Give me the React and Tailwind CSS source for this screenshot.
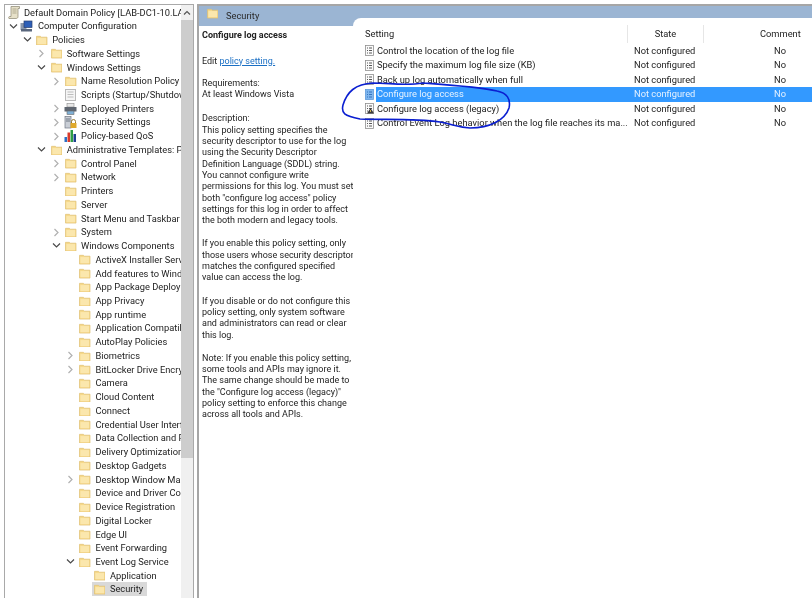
const tree = [
  ["Computer Configuration", 1, "open", "computer"],
  ["Policies", 2, "open"],
  ["Software Settings", 3, "closed"],
  ["Windows Settings", 3, "open"],
  ["Name Resolution Policy", 4, "closed"],
  ["Scripts (Startup/Shutdown)", 4, null, "scripts"],
  ["Deployed Printers", 4, "closed", "printer"],
  ["Security Settings", 4, "closed", "security"],
  ["Policy-based QoS", 4, "closed", "qos"],
  ["Administrative Templates: Policy", 3, "open"],
  ["Control Panel", 4, "closed"],
  ["Network", 4, "closed"],
  ["Printers", 4],
  ["Server", 4],
  ["Start Menu and Taskbar", 4],
  ["System", 4, "closed"],
  ["Windows Components", 4, "open"],
  ["ActiveX Installer Service", 5],
  ["Add features to Windows", 5],
  ["App Package Deployment", 5],
  ["App Privacy", 5],
  ["App runtime", 5],
  ["Application Compatibility", 5],
  ["AutoPlay Policies", 5],
  ["Biometrics", 5, "closed"],
  ["BitLocker Drive Encryption", 5, "closed"],
  ["Camera", 5],
  ["Cloud Content", 5],
  ["Connect", 5],
  ["Credential User Interface", 5],
  ["Data Collection and Preview", 5],
  ["Delivery Optimization", 5],
  ["Desktop Gadgets", 5],
  ["Desktop Window Manager", 5, "closed"],
  ["Device and Driver Compat", 5],
  ["Device Registration", 5],
  ["Digital Locker", 5],
  ["Edge UI", 5],
  ["Event Forwarding", 5],
  ["Event Log Service", 5, "open"],
  ["Application", 6],
  ["Security", 6, null, null, true],
  ["Setup", 6],
];

const indent = {
  1: "pl-[1px]",
  2: "pl-[15.4px]",
  3: "pl-[29.8px]",
  4: "pl-[44.2px]",
  5: "pl-[58.6px]",
  6: "pl-[73px]",
};

const settings = [
  ["Control the location of the log file", "doc"],
  ["Specify the maximum log file size (KB)", "doc"],
  ["Back up log automatically when full", "doc"],
  ["Configure log access", "doc", true],
  ["Configure log access (legacy)", "legacy"],
  ["Control Event Log behavior when the log file reaches its ma...", "doc"],
];

const description = [
  [
    "This policy setting specifies the",
    "security descriptor to use for the log",
    "using the Security Descriptor",
    "Definition Language (SDDL) string.",
    "You cannot configure write",
    "permissions for this log. You must set",
    "both \"configure log access\" policy",
    "settings for this log in order to affect",
    "the both modern and legacy tools.",
  ],
  [
    "If you enable this policy setting, only",
    "those users whose security descriptor",
    "matches the configured specified",
    "value can access the log.",
  ],
  [
    "If you disable or do not configure this",
    "policy setting, only system software",
    "and administrators can read or clear",
    "this log.",
  ],
  [
    "Note: If you enable this policy setting,",
    "some tools and APIs may ignore it.",
    "The same change should be made to",
    "the \"Configure log access (legacy)\"",
    "policy setting to enforce this change",
    "across all tools and APIs.",
  ],
];

const Chevron = ({ kind }) => (
  <span className="w-[14.4px] h-full flex items-center justify-center shrink-0">
    {kind === "open" && (
      <svg width="9" height="7" viewBox="0 0 9 7">
        <path d="M1 1.5 L4.5 5 L8 1.5" fill="none" stroke="#4a4a4a" strokeWidth="1.2" />
      </svg>
    )}
    {kind === "closed" && (
      <svg width="7" height="9" viewBox="0 0 7 9">
        <path d="M1.5 1 L5 4.5 L1.5 8" fill="none" stroke="#b0b0b0" strokeWidth="1.2" />
      </svg>
    )}
  </span>
);

const Folder = () => (
  <svg width="11.5" height="10.5" viewBox="0 0 13 12" className="shrink-0 ml-[1.5px]">
    <path d="M0.5 1.5 H5 L6 2.5 H12.5 V11.5 H0.5 Z" fill="#f6d98a" stroke="#dfc072" strokeWidth="0.8" />
    <rect x="1.5" y="3.5" width="10" height="7" fill="#fbe7ad" />
  </svg>
);

const TreeIcon = ({ name }) => {
  if (name === "computer")
    return (
      <svg width="13" height="12" viewBox="0 0 13 12" className="shrink-0">
        <rect x="0.5" y="3" width="6" height="7" fill="#8a97ab" />
        <rect x="4" y="1" width="8" height="6.5" fill="#2d5fb8" stroke="#28406e" strokeWidth="0.7" />
        <rect x="1" y="9" width="11" height="2.5" fill="#59667c" />
      </svg>
    );
  if (name === "scripts")
    return (
      <svg width="13" height="12" viewBox="0 0 13 12" className="shrink-0">
        <rect x="1.5" y="0.5" width="10" height="11" fill="#f5f5f5" stroke="#b9b9b9" />
        <path d="M3.5 3 H9.5 M3.5 5.5 H9.5 M3.5 8 H9.5" stroke="#bdbdbd" strokeWidth="1" />
      </svg>
    );
  if (name === "printer")
    return (
      <svg width="13" height="12" viewBox="0 0 13 12" className="shrink-0">
        <rect x="3" y="0.5" width="7" height="3.5" fill="#e8e8e8" stroke="#8c8c8c" strokeWidth="0.6" />
        <rect x="0.5" y="4" width="12" height="4.5" fill="#5f6670" />
        <rect x="3" y="8" width="7" height="3.5" fill="#7fb0d6" stroke="#6a6a6a" strokeWidth="0.6" />
      </svg>
    );
  if (name === "security")
    return (
      <svg width="13" height="13" viewBox="0 0 13 13" className="shrink-0">
        <rect x="1" y="0.5" width="6" height="11.5" fill="#c9ced6" stroke="#6f7784" strokeWidth="0.7" />
        <path d="M2 3 H6 M2 5 H6" stroke="#59626f" strokeWidth="0.8" />
        <path d="M7.5 7 V5.5 A2 2 0 0 1 11.5 5.5 V7" fill="none" stroke="#8c6d1f" strokeWidth="0.9" />
        <rect x="6.5" y="7" width="6" height="5" fill="#dfa92c" />
      </svg>
    );
  if (name === "qos")
    return (
      <svg width="13" height="12" viewBox="0 0 13 12" className="shrink-0">
        <rect x="0.5" y="7" width="2.5" height="5" fill="#2b6fc4" />
        <rect x="3.5" y="2.5" width="2.5" height="9.5" fill="#d93a2b" />
        <rect x="6.5" y="0" width="2.5" height="12" fill="#2f9e44" />
        <rect x="9.5" y="4" width="2.5" height="8" fill="#1d3f8f" />
      </svg>
    );
  return <Folder />;
};

const SettingIcon = ({ kind, active }) => (
  <svg width="9" height="11" viewBox="0 0 9 11" className="shrink-0">
    <rect
      x="0.5"
      y="0.5"
      width="8"
      height="10"
      fill={active ? "#7fb6ee" : "#fbfbfb"}
      stroke={active ? "#5f9bdb" : "#8f8f8f"}
      strokeWidth="0.8"
    />
    <path
      d="M2 3 H3 M4 3 H7 M2 5.5 H3 M4 5.5 H7 M2 8 H3 M4 8 H7"
      stroke={active ? "#2c6cb8" : "#444"}
      strokeWidth="0.9"
    />
    {kind === "legacy" && (
      <>
        <path d="M5.5 5 L9 10.5 H2 Z" fill="#3c3c3c" />
        <rect x="5.2" y="7" width="0.8" height="2" fill="#f4d25a" />
      </>
    )}
  </svg>
);

const App = () => {
  return (
    <div className="relative w-[812px] h-[602px] overflow-hidden bg-white flex pl-1 pt-1 pb-1 text-[9.3px] text-[#222] font-['Roboto',sans-serif] blur-[0.3px]">
      {/* tree pane */}
      <div className="w-[190px] shrink-0 flex border-l border-t border-[#a9a9a9]">
        <div className="w-[176px] shrink-0 overflow-hidden pt-[0.6px]">
          <div className="h-[13.74px] flex items-center whitespace-nowrap pl-[3px]">
            <svg width="12" height="13" viewBox="0 0 12 13" className="shrink-0">
              <path d="M3 0.5 H11.5 V2.5 H10 V10.5 C10 12 9 12.5 8 12.5 H1 C0.5 12.5 0.5 10.5 1.5 10.5 H3 Z" fill="#e6e0c8" stroke="#8a8570" strokeWidth="0.7" />
              <path d="M4.5 3 H8.5 M4.5 5 H8.5 M4.5 7 H8.5" stroke="#9a9478" strokeWidth="0.7" />
            </svg>
            <span className="ml-[4px]">Default Domain Policy [LAB-DC1-10.LAB.LOCAL] Policy</span>
          </div>
          {tree.map(([label, depth, arrow, icon, selected]) => (
            <div key={label + depth} className={`h-[13.74px] flex items-center whitespace-nowrap ${indent[depth]}`}>
              <Chevron kind={arrow} />
              <span className={`flex items-center h-full pr-[3.5px] ${selected ? "bg-[#d9d9d9]" : ""}`}>
                <TreeIcon name={icon} />
                <span className="ml-[4.5px] leading-[13.74px]">{label}</span>
              </span>
            </div>
          ))}
        </div>
        <div className="w-[12px] shrink-0 bg-[#f0f0f0] flex flex-col">
          <div className="h-[15px] flex items-center justify-center">
            <svg width="8" height="6" viewBox="0 0 8 6">
              <path d="M1 4.5 L4 1.5 L7 4.5" fill="none" stroke="#555" strokeWidth="1.2" />
            </svg>
          </div>
          <div className="h-[438px] bg-[#cdcdcd]" />
        </div>
        <div className="w-px shrink-0 bg-[#a9a9a9]" />
      </div>

      {/* details pane */}
      <div className="ml-[3px] flex-1 flex flex-col border-l-2 border-t-2 border-[#a6a6a6] min-w-0">
        <div className="h-[12px] bg-[#9bb5d3] flex items-start pl-[6px] pt-[2px] relative">
          <Folder />
          <span className="ml-[8px] mt-[1px] text-[#2a2a2a]">Security</span>
        </div>
        <div className="flex-1 flex min-h-0">
          <div className="w-[154px] shrink-0 flex flex-col">
            <div className="h-[8px] bg-[#9bb5d3] shrink-0" />
            <div className="pl-[3px] pt-[4.3px] leading-[11.3px] text-[9px] whitespace-nowrap">
              <p className="font-bold">Configure log access</p>
              <p className="mt-[14px]">
                Edit <span className="text-[#1a6fc4] underline">policy setting.</span>
              </p>
              <p className="mt-[11px]">Requirements:</p>
              <p>At least Windows Vista</p>
              <p className="mt-[13px]">Description:</p>
              {description.map((lines, i) => (
                <div key={i} className={i ? "mt-[12px]" : ""}>
                  {lines.map((line) => (
                    <p key={line}>{line}</p>
                  ))}
                </div>
              ))}
            </div>
          </div>
          <div className="flex-1 bg-[#9bb5d3] min-w-0">
            <div className="h-full bg-white rounded-tl-lg">
              <div className="h-[25px] flex items-end">
                <div className="w-[274px] h-[18px] pl-[12px] flex items-center">Setting</div>
                <div className="w-[77px] h-[18px] border-l border-r border-[#e6e6e6] flex items-center justify-center">State</div>
                <div className="h-[18px] pl-[56px] flex items-center">Comment</div>
              </div>
              <div className="pt-[0.6px]">
                {settings.map(([label, kind, active]) => (
                  <div key={label} className="h-[14.5px] flex items-center whitespace-nowrap">
                    <div className="w-[23px] flex justify-end pr-[2px] shrink-0">
                      <SettingIcon kind={kind} active={active} />
                    </div>
                    <div className={`flex-1 h-full flex items-center ${active ? "bg-[#3399ff] text-[#e6f2ff]" : ""}`}>
                      <span className="w-[258px] pl-[1px]">{label}</span>
                      <span className="w-[118px]">Not configured</span>
                      <span className="pl-[22px]">No</span>
                    </div>
                  </div>
                ))}
              </div>
            </div>
          </div>
        </div>
      </div>

      {/* hand-drawn marker annotation */}
      <svg className="absolute inset-0 pointer-events-none" width="812" height="602" viewBox="0 0 812 602">
        <path
          d="M373 83 C355 84 347 92 343 105 C341 113 344 116 360 119 C385 120 415 118 440 122 C452 124 456 127 470 128 C490 128 505 120 509 108 C511 99 507 93 497 91 C480 87 450 85 423 83 C405 86 390 83 373 83 Z"
          fill="none"
          stroke="#0b1fd1"
          strokeWidth="1.6"
        />
      </svg>
    </div>
  );
};

export default App;
